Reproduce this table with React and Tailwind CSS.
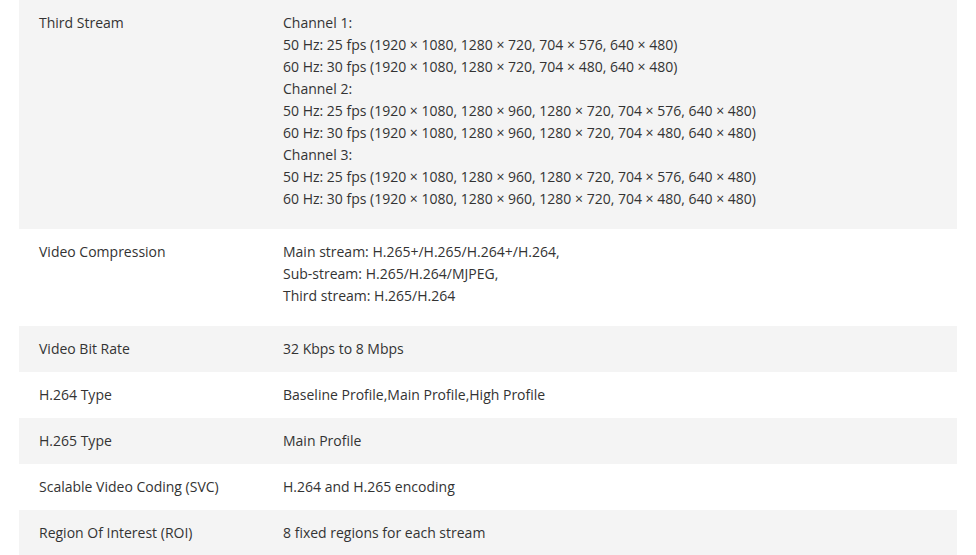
import React from "react";

const rows = [
  {
    label: "Third Stream",
    lines: [
      "Channel 1:",
      "50 Hz: 25 fps (1920 × 1080, 1280 × 720, 704 × 576, 640 × 480)",
      "60 Hz: 30 fps (1920 × 1080, 1280 × 720, 704 × 480, 640 × 480)",
      "Channel 2:",
      "50 Hz: 25 fps (1920 × 1080, 1280 × 960, 1280 × 720, 704 × 576, 640 × 480)",
      "60 Hz: 30 fps (1920 × 1080, 1280 × 960, 1280 × 720, 704 × 480, 640 × 480)",
      "Channel 3:",
      "50 Hz: 25 fps (1920 × 1080, 1280 × 960, 1280 × 720, 704 × 576, 640 × 480)",
      "60 Hz: 30 fps (1920 × 1080, 1280 × 960, 1280 × 720, 704 × 480, 640 × 480)",
    ],
  },
  {
    label: "Video Compression",
    lines: [
      "Main stream: H.265+/H.265/H.264+/H.264,",
      "Sub-stream: H.265/H.264/MJPEG,",
      "Third stream: H.265/H.264",
    ],
  },
  { label: "Video Bit Rate", lines: ["32 Kbps to 8 Mbps"] },
  { label: "H.264 Type", lines: ["Baseline Profile,Main Profile,High Profile"] },
  { label: "H.265 Type", lines: ["Main Profile"] },
  { label: "Scalable Video Coding (SVC)", lines: ["H.264 and H.265 encoding"] },
  { label: "Region Of Interest (ROI)", lines: ["8 fixed regions for each stream"] },
];

export default function App() {
  return (
    <div
      className="min-h-screen bg-white px-[19px] text-[14px] leading-[22px] text-[#333333]"
      style={{ fontFamily: '"Open Sans", "Noto Sans", sans-serif' }}
    >
      <div className="flex flex-col">
        {rows.map((row, i) => {
          const multi = row.lines.length > 1;
          return (
            <div
              key={row.label}
              className={`flex ${i % 2 === 0 ? "bg-[#f4f4f4]" : "bg-white"} ${
                multi ? "pt-[12px] pb-[19px]" : "py-[12px]"
              }`}
            >
              <div className="w-[264px] shrink-0 pl-[20px]">{row.label}</div>
              <div className="flex-1">
                {row.lines.map((line, j) => (
                  <div key={j}>{line}</div>
                ))}
              </div>
            </div>
          );
        })}
      </div>
    </div>
  );
}
